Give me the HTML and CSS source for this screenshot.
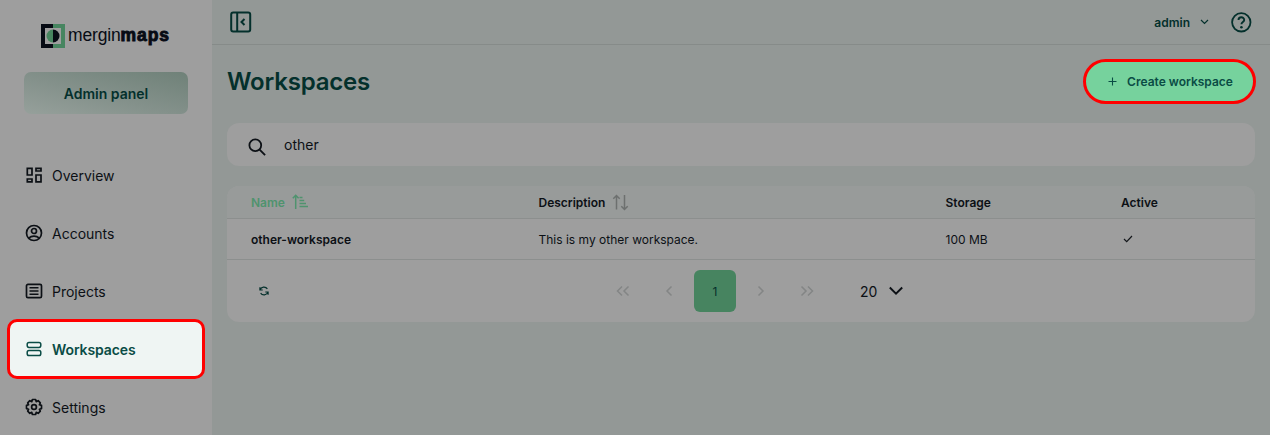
FILE: index.html
```html
<!DOCTYPE html>
<html lang="en">
<head>
<meta charset="utf-8">
<title>Workspaces</title>
<link rel="stylesheet" href="styles.css">
</head>
<body>
<div class="app">
  <aside class="sidebar">
    <div class="logo">
      <svg width="24" height="24" viewBox="0 0 24 24">
        <path d="M0 0H12V4H4V20H12V24H0Z" fill="#070b14"/>
        <path d="M12 0H24V24H12V20H20V4H12Z" fill="#478560"/>
        <path d="M12 5.500A6.500 6.500 0 0 0 12 18.500Z" fill="#478560"/>
        <path d="M12 5.500A6.500 6.500 0 0 1 12 18.500Z" fill="#070b14"/>
      </svg>
      <span class="logo-text">mergin<b>maps</b></span>
    </div>
    <div class="panel-badge">Admin panel</div>
    <nav class="menu">
      <a class="menu-item">
        <svg class="icon" viewBox="0 0 18 18"><path d="M2.300 2.300H7V9H2.300ZM11 2.300H16V5H11ZM11 9H16V15.800H11ZM2.300 13H7V15.800H2.300Z"/></svg>
        <span>Overview</span>
      </a>
      <a class="menu-item">
        <svg class="icon" viewBox="0 0 18 18"><circle cx="9" cy="9" r="7.500"/><circle cx="9" cy="7" r="2.500"/><path d="M3.800 14C6.500 11.500 11.500 11.500 14.200 14"/></svg>
        <span>Accounts</span>
      </a>
      <a class="menu-item">
        <svg class="icon" viewBox="0 0 18 18"><rect x="1.500" y="2.300" width="15" height="13.400" rx="1.500"/><path d="M4.500 5.800H13.500M4.500 9H13.500M4.500 12.200H13.500" stroke-width="1.500"/></svg>
        <span>Projects</span>
      </a>
      <a class="menu-item menu-item-active">
        <svg class="icon" viewBox="0 0 18 18"><rect x="2.200" y="2.500" width="13.600" height="4.900" rx="1.800"/><rect x="2.200" y="10.600" width="13.600" height="5" rx="1.800"/></svg>
        <span>Workspaces</span>
      </a>
      <a class="menu-item">
        <svg class="icon" viewBox="0 0 18 18"><path stroke-linejoin="round" d="M7.400 1.500H10.600L11.200 3.600L13.200 2.700L15.300 4.800L14.400 6.800L16.500 7.400V10.600L14.400 11.200L15.300 13.200L13.200 15.300L11.200 14.400L10.600 16.500H7.400L6.800 14.400L4.800 15.300L2.700 13.200L3.600 11.200L1.500 10.600V7.400L3.600 6.800L2.700 4.800L4.800 2.700L6.800 3.600Z"/><circle cx="9" cy="9" r="2.400"/></svg>
        <span>Settings</span>
      </a>
    </nav>
  </aside>
  <div class="content">
    <header class="topbar">
      <svg class="stroke" width="22" height="22" viewBox="0 0 22 22"><rect x="1.200" y="1.500" width="19" height="19" rx="2" stroke-width="2"/><path d="M7.200 1.500V20.500M14.500 8L11.500 11L14.500 14" stroke-width="2"/></svg>
      <div class="user">
        <span>admin</span>
        <svg class="stroke caret" width="9" height="6" viewBox="0 0 9 6"><path d="M1 1L4.500 4.500L8 1" stroke-width="1.200"/></svg>
        <svg class="stroke" width="22" height="22" viewBox="0 0 22 22"><circle cx="11.300" cy="11.300" r="9.200" stroke-width="1.800"/><path d="M8.500 9C8.500 5.400 14.200 5.400 14.200 8.900C14.200 11 11.400 10.900 11.400 13.300" stroke-width="1.900"/><circle cx="11.400" cy="16.200" r="1.300" fill="#04302c" stroke="none"/></svg>
      </div>
    </header>
    <main class="main">
      <div class="title-row">
        <h1>Workspaces</h1>
        <button class="create">
          <svg width="9" height="9" viewBox="0 0 9 9"><path d="M4.500 .5V8.500M.5 4.500H8.500"/></svg>
          <span>Create workspace</span>
        </button>
      </div>
      <div class="search">
        <svg width="18" height="18" viewBox="0 0 18 18"><circle cx="7.300" cy="7.300" r="5.900"/><path d="M11.600 11.600L17.100 17.100"/></svg>
        <span>other</span>
      </div>
      <section class="table">
        <div class="row head">
          <div class="sorted">Name
            <svg width="17" height="16" viewBox="0 0 17 16"><path d="M3.700 15V1.500M.8 4.200L3.700 1.300L6.600 4.200M7.500 3.500H10.500M7.500 6.500H12.200M7.500 9.500H14M7.500 12.500H16" stroke="#4f936e" stroke-width="1.500"/></svg>
          </div>
          <div>Description
            <svg width="17" height="17" viewBox="0 0 17 17"><path d="M4.500 15.500V1.500M1.300 4.700L4.500 1.500L7.700 4.700M12.500 1V15.500M9.300 12.300L12.500 15.500L15.700 12.300" stroke="#6d706f" stroke-width="1.500"/></svg>
          </div>
          <div>Storage</div>
          <div>Active</div>
        </div>
        <div class="row">
          <div class="strong">other-workspace</div>
          <div>This is my other workspace.</div>
          <div>100 MB</div>
          <div><svg class="check" width="10" height="8" viewBox="0 0 10 8"><path d="M1 4L3.700 6.600L9 1" stroke="#14171b" stroke-width="1.200"/></svg></div>
        </div>
        <footer class="pager">
          <svg class="refresh" width="10" height="10" viewBox="0 0 11 11"><path d="M1.200 4.400C2.200 .7 7.200 .2 9.200 3.200M9.800 6.600C8.800 10.300 3.800 10.800 1.800 7.800M1 1.300V4.400H4.100M10 9.700V6.600H6.900"/></svg>
          <div class="pages">
            <svg class="arrow" width="14" height="12" viewBox="0 0 14 12"><path d="M6 1.500L1.500 6L6 10.500M12.500 1.500L8 6L12.500 10.500"/></svg>
            <svg class="arrow" width="14" height="12" viewBox="0 0 14 12"><path d="M9.500 1.500L5 6L9.500 10.500"/></svg>
            <span class="current">1</span>
            <svg class="arrow" width="14" height="12" viewBox="0 0 14 12"><path d="M4.500 1.500L9 6L4.500 10.500"/></svg>
            <svg class="arrow" width="14" height="12" viewBox="0 0 14 12"><path d="M1.500 1.500L6 6L1.500 10.500M8 1.500L12.500 6L8 10.500"/></svg>
          </div>
          <div class="page-size">20
            <svg width="16" height="10" viewBox="0 0 16 10"><path d="M1.800 1.500L8 7.700L14.200 1.500" stroke="#0c1015" stroke-width="1.900"/></svg>
          </div>
        </footer>
      </section>
    </main>
  </div>
</div>
</body>
</html>
```

FILE: styles.css
```css
* { box-sizing: border-box; }
body {
  margin: 0;
  height: 435px;
  overflow: hidden;
  background: #939896;
  color: #0c1015;
  font-family: Inter, "Liberation Sans", sans-serif;
  font-size: 12px;
}
svg { display: block; flex: none; fill: none; }
.app { display: flex; height: 435px; }
.sidebar { width: 212px; flex: none; background: #9e9e9e; overflow: hidden; }
.logo {
  display: flex;
  align-items: center;
  gap: 3px;
  height: 24px;
  margin: 24px 0 24px 41px;
  color: #070b14;
}
.logo-text {
  font-family: "Liberation Sans", Arial, sans-serif;
  font-size: 17.500px;
  letter-spacing: -0.15px;
  line-height: 20px;
  margin-top: -3px;
}
.logo-text b { letter-spacing: 0.9px; -webkit-text-stroke: 0.9px #070b14; }
.panel-badge {
  width: 164px;
  height: 42px;
  margin-left: 24px;
  border-radius: 7px;
  background: linear-gradient(14deg, #96a09b 0%, #84918b 45%, #6f8178 100%);
  color: #04302c;
  font-size: 14px;
  font-weight: 600;
  line-height: 43px;
  text-align: center;
}
.menu { padding: 32px 7px 0; }
.menu-item {
  display: flex;
  align-items: center;
  gap: 9px;
  height: 58px;
  padding-left: 18px;
  font-size: 14px;
}
.icon { width: 18px; height: 18px; stroke: #0c1015; stroke-width: 1.7; }
.menu-item-active {
  height: 60px;
  margin: -1px 0;
  border: 3px solid #ff0000;
  border-radius: 10px;
  padding-left: 15px;
  background: #eff5f3;
  color: #0a4c45;
  font-weight: 600;
}
.menu-item-active span { letter-spacing: -0.1px; }
.menu-item-active .icon { stroke: #0a4c45; stroke-width: 1.5; }
.content { flex: 1; }
.topbar {
  display: flex;
  justify-content: space-between;
  align-items: center;
  height: 45px;
  padding: 0 18px;
  border-bottom: 1px solid #868b89;
}
.stroke { stroke: #04302c; }
.user { display: flex; align-items: center; color: #04302c; font-weight: 600; }
.caret { margin: 0 21px 0 10px; }
.main { padding: 14px 15px 0; }
.title-row { display: flex; justify-content: space-between; align-items: center; height: 45px; }
h1 { margin: 0; font-size: 24px; letter-spacing: -0.2px; line-height: 30px; font-weight: 600; color: #04302c; }
.create {
  display: flex;
  align-items: center;
  justify-content: center;
  gap: 10px;
  width: 173px;
  height: 45px;
  margin-right: -1px;
  padding: 0 0 0 2px;
  border: 3px solid #ff0000;
  border-radius: 23px;
  background: #76d29d;
  color: #0a4c45;
  font: 600 12px Inter, sans-serif;
}
.create svg { stroke: #0a4c45; stroke-width: 1.1; }
.search {
  display: flex;
  align-items: center;
  gap: 18px;
  height: 43px;
  margin: 19px 0 20px;
  padding-left: 21px;
  border-radius: 12px;
  background: #9e9e9e;
  font-size: 14px;
}
.search svg { stroke: #0c1015; stroke-width: 1.8; margin-top: 5px; }
.table { background: #9e9e9e; border-radius: 12px; overflow: hidden; }
.row {
  display: grid;
  grid-template-columns: 287.500px 407px 175.500px auto;
  align-items: center;
  height: 41px;
  padding-left: 24px;
  border-bottom: 1px solid #8c8f8e;
}
.head { height: 33px; background: #989b9a; font-weight: 600; }
.head > div { display: flex; align-items: center; gap: 7px; }
.head .sorted { color: #4f936e; }
.strong { font-weight: 600; }
.check { margin-left: 2px; }
.pager { display: flex; align-items: center; height: 62px; padding-left: 32px; }
.refresh { stroke: #04302c; stroke-width: 1.3; }
.pages { display: flex; align-items: center; margin-left: 347px; gap: 32px; }
.arrow { stroke: #838585; stroke-width: 1.5; }
.current {
  width: 42px;
  height: 42px;
  margin: 0 -14px;
  border-radius: 6px;
  background: #478460;
  color: #04302c;
  line-height: 43px;
  text-align: center;
}
.page-size { display: flex; align-items: center; gap: 11px; margin-left: 46px; font-size: 14px; }
```
